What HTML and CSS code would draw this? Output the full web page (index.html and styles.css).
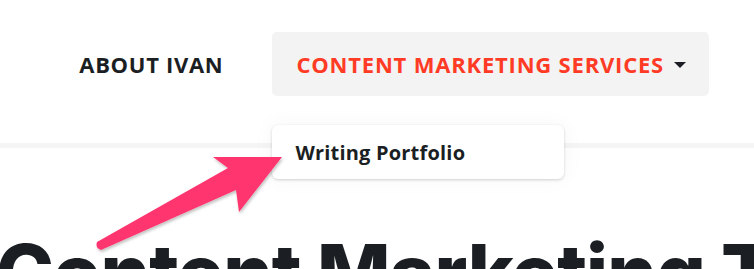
FILE: index.html
```html
<!DOCTYPE html>
<html lang="en">
<head>
<meta charset="utf-8">
<title>Content Marketing Tips</title>
<link rel="stylesheet" href="styles.css">
</head>
<body>
<header class="site-header">
  <nav class="nav">
    <a class="nav-link" href="#">About Ivan</a>
    <div class="nav-item">
      <a class="nav-button" href="#">Content Marketing Services <span class="caret"></span></a>
      <div class="dropdown-menu">
        <a class="dropdown-link" href="#">Writing Portfolio</a>
      </div>
    </div>
  </nav>
</header>
<div class="header-rule"></div>
<main class="content">
  <h1 class="page-title">Content Marketing Tips</h1>
</main>
<svg class="annotation-arrow" width="754" height="269" viewBox="0 0 754 269">
  <defs>
    <filter id="sh" x="-10%" y="-10%" width="130%" height="130%">
      <feDropShadow dx="1" dy="2" stdDeviation="1.5" flood-color="#000" flood-opacity="0.25"/>
    </filter>
  </defs>
  <path d="M282 157 L213 157 L228 168 L97 242 Q95 248 101 250 L236 190 L239 212 Z" fill="#fe346e" filter="url(#sh)"/>
</svg>
</body>
</html>
```
FILE: styles.css
```css
html, body {
  margin: 0;
  padding: 0;
  background: #ffffff;
  overflow: hidden;
}
body {
  width: 754px;
  height: 269px;
  position: relative;
  font-family: "Open Sans", "Liberation Sans", sans-serif;
  color: #1b1f23;
}
.site-header {
  height: 143px;
  box-sizing: border-box;
  padding-top: 32px;
}
.nav {
  display: flex;
  justify-content: flex-end;
  align-items: center;
  gap: 49px;
  padding-right: 45px;
}
.nav-link {
  font-size: 22px;
  font-weight: 700;
  letter-spacing: 0.7px;
  text-transform: uppercase;
  color: #1b1f23;
  text-decoration: none;
  line-height: 64px;
}
.nav-item {
  position: relative;
}
.nav-button {
  display: flex;
  align-items: center;
  gap: 10px;
  height: 64px;
  box-sizing: border-box;
  padding: 0 23px 0 24px;
  background: #f3f3f3;
  border-radius: 5px;
  font-size: 22px;
  font-weight: 700;
  letter-spacing: 0.8px;
  text-transform: uppercase;
  color: #ff3b25;
  text-decoration: none;
}
.caret {
  width: 0;
  height: 0;
  border-left: 6.5px solid transparent;
  border-right: 6.5px solid transparent;
  border-top: 6.5px solid #1b1f23;
  margin-top: 2px;
}
.dropdown-menu {
  position: absolute;
  top: calc(100% + 29px);
  left: 0;
  width: 292px;
  height: 54px;
  box-sizing: border-box;
  padding-left: 23px;
  display: flex;
  align-items: center;
  background: #ffffff;
  border-radius: 6px;
  box-shadow: 0 1px 3px rgba(0, 0, 0, 0.18), 0 0 24px rgba(0, 0, 0, 0.04);
  z-index: 2;
}
.dropdown-link {
  font-size: 20px;
  font-weight: 700;
  letter-spacing: 0.2px;
  color: #1b1f23;
  text-decoration: none;
}
.header-rule {
  height: 5px;
  background: #f5f5f5;
}
.content {
  padding-top: 86px;
}
.page-title {
  margin: 0 0 0 -4px;
  font-family: "Inter", "Liberation Sans", sans-serif;
  font-weight: 800;
  font-size: 78px;
  line-height: 1;
  letter-spacing: -0.9px;
  white-space: nowrap;
  color: #1b1f23;
}
.annotation-arrow {
  position: absolute;
  left: 0;
  top: 0;
  pointer-events: none;
  z-index: 3;
}
```
